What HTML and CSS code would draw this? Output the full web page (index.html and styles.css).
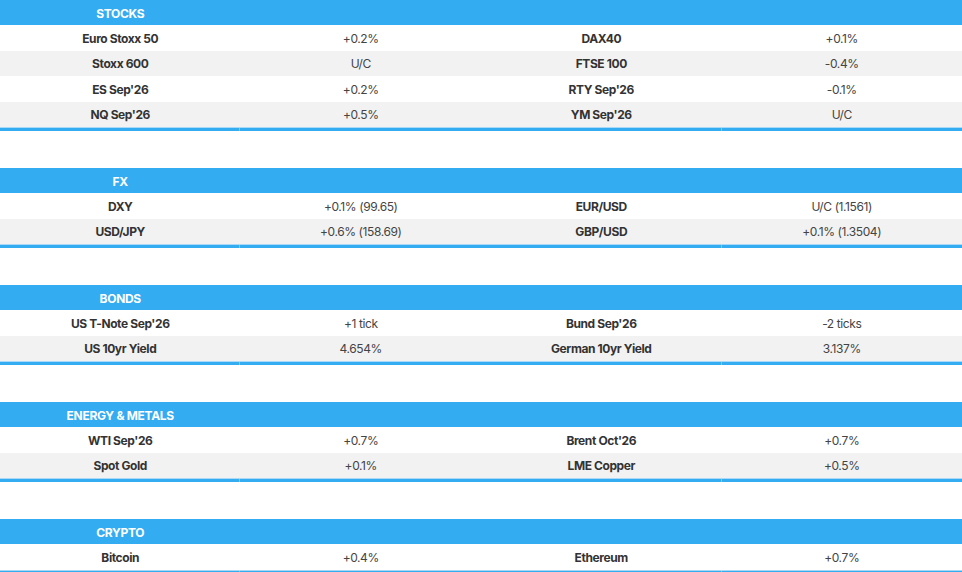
FILE: index.html
```html
<!DOCTYPE html>
<html lang="en">
<head>
<meta charset="utf-8">
<title>Markets</title>
<link rel="stylesheet" href="styles.css">
</head>
<body>
<div class="page">
  <section class="market">
    <div class="head"><span class="title">STOCKS</span></div>
    <div class="row"><span class="name">Euro Stoxx 50</span><span class="val">+0.2%</span><span class="name">DAX40</span><span class="val">+0.1%</span></div>
    <div class="row"><span class="name">Stoxx 600</span><span class="val">U/C</span><span class="name">FTSE 100</span><span class="val">-0.4%</span></div>
    <div class="row"><span class="name">ES Sep'26</span><span class="val">+0.2%</span><span class="name">RTY Sep'26</span><span class="val">-0.1%</span></div>
    <div class="row"><span class="name">NQ Sep'26</span><span class="val">+0.5%</span><span class="name">YM Sep'26</span><span class="val">U/C</span></div>
    <div class="foot"><span></span><span></span><span></span></div>
  </section>
  <section class="market">
    <div class="head"><span class="title">FX</span></div>
    <div class="row"><span class="name">DXY</span><span class="val">+0.1% (99.65)</span><span class="name">EUR/USD</span><span class="val">U/C (1.1561)</span></div>
    <div class="row"><span class="name">USD/JPY</span><span class="val">+0.6% (158.69)</span><span class="name">GBP/USD</span><span class="val">+0.1% (1.3504)</span></div>
    <div class="foot"><span></span><span></span><span></span></div>
  </section>
  <section class="market">
    <div class="head"><span class="title">BONDS</span></div>
    <div class="row"><span class="name">US T-Note Sep'26</span><span class="val">+1 tick</span><span class="name">Bund Sep'26</span><span class="val">-2 ticks</span></div>
    <div class="row"><span class="name">US 10yr Yield</span><span class="val">4.654%</span><span class="name">German 10yr Yield</span><span class="val">3.137%</span></div>
    <div class="foot"><span></span><span></span><span></span></div>
  </section>
  <section class="market">
    <div class="head"><span class="title">ENERGY &amp; METALS</span></div>
    <div class="row"><span class="name">WTI Sep'26</span><span class="val">+0.7%</span><span class="name">Brent Oct'26</span><span class="val">+0.7%</span></div>
    <div class="row"><span class="name">Spot Gold</span><span class="val">+0.1%</span><span class="name">LME Copper</span><span class="val">+0.5%</span></div>
    <div class="foot"><span></span><span></span><span></span></div>
  </section>
  <section class="market">
    <div class="head"><span class="title">CRYPTO</span></div>
    <div class="row"><span class="name">Bitcoin</span><span class="val">+0.4%</span><span class="name">Ethereum</span><span class="val">+0.7%</span></div>
    <div class="foot"><span></span><span></span><span></span></div>
  </section>
</div>
</body>
</html>
```
FILE: styles.css
```css
html, body {
  margin: 0;
  padding: 0;
  background: #ffffff;
}
body {
  font-family: Inter, "Liberation Sans", Arial, sans-serif;
  color: #333333;
  font-size: 12px;
  letter-spacing: -0.4px;
}
.page {
  display: flex;
  flex-direction: column;
  gap: 37px;
  width: 962px;
}
.market {
  display: flex;
  flex-direction: column;
}
.head {
  display: grid;
  grid-template-columns: repeat(4, 1fr);
  height: 25px;
  background: #33acf1;
  align-items: center;
}
.title {
  text-align: center;
  color: #ffffff;
  font-weight: 700;
  font-size: 12px;
  letter-spacing: -0.3px;
  padding-top: 1px;
}
.row {
  display: grid;
  grid-template-columns: repeat(4, 1fr);
  height: 25.5px;
  align-items: center;
  background: #ffffff;
}
.row:nth-of-type(odd) {
  background: #f2f2f2;
}
.row:nth-of-type(even) {
  background: #ffffff;
}
.name, .val {
  text-align: center;
  padding-top: 1px;
}
.name {
  font-weight: 700;
  color: #333333;
}
.val {
  font-weight: 400;
  color: #444444;
}
.foot {
  display: grid;
  grid-template-columns: 239px 482px 1fr;
  height: 3px;
  background: #33acf1;
  border-top: 0.5px solid #a9d9f6;
}
.foot span + span {
  border-left: 1px solid #7fc8f4;
}
```
